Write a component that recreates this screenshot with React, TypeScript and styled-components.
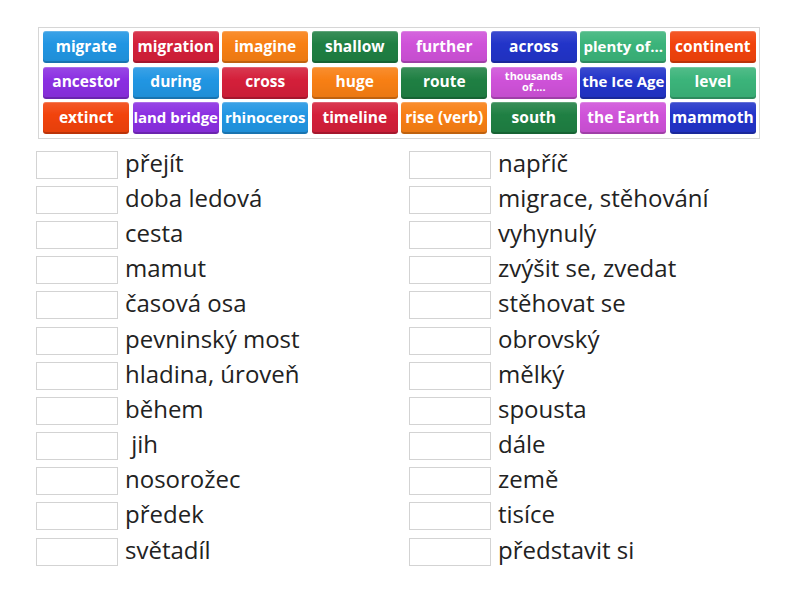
import React from 'react';
import styled, { createGlobalStyle } from 'styled-components';

// ----------------------------------------------------
// Global
// ----------------------------------------------------

const GlobalStyle = createGlobalStyle`
  body {
    margin: 0;
    background: #ffffff;
    font-family: "Open Sans", "Noto Sans", sans-serif;
  }
`;

// ----------------------------------------------------
// Tiles
// ----------------------------------------------------

const palette: Record<string, string> = {
  blue: '#2196e3',
  red: '#d41f3a',
  orange: '#f87f14',
  green: '#1f8043',
  pink: '#cf52d9',
  navy: '#2234c9',
  teal: '#3bb47a',
  flame: '#f2430c',
  purple: '#8b2fe2',
};

const tiles: { text: string; color: string; size?: number }[] = [
  { text: 'migrate', color: 'blue' },
  { text: 'migration', color: 'red' },
  { text: 'imagine', color: 'orange' },
  { text: 'shallow', color: 'green' },
  { text: 'further', color: 'pink' },
  { text: 'across', color: 'navy' },
  { text: 'plenty of...', color: 'teal', size: 15 },
  { text: 'continent', color: 'flame' },
  { text: 'ancestor', color: 'purple' },
  { text: 'during', color: 'blue' },
  { text: 'cross', color: 'red' },
  { text: 'huge', color: 'orange' },
  { text: 'route', color: 'green' },
  { text: 'thousands of....', color: 'pink', size: 11 },
  { text: 'the Ice Age', color: 'navy', size: 15 },
  { text: 'level', color: 'teal' },
  { text: 'extinct', color: 'flame' },
  { text: 'land bridge', color: 'purple', size: 15 },
  { text: 'rhinoceros', color: 'blue', size: 15 },
  { text: 'timeline', color: 'red' },
  { text: 'rise (verb)', color: 'orange' },
  { text: 'south', color: 'green' },
  { text: 'the Earth', color: 'pink' },
  { text: 'mammoth', color: 'navy' },
];

const Page = styled.div`
  padding: 27px 0 0 38px;
  width: 722px;
`;

const TileBox = styled.div`
  border: 1px solid #d6d6d6;
  background: #fff;
  padding: 3px 3px 4px 4px;
  display: grid;
  grid-template-columns: repeat(8, 1fr);
  grid-auto-rows: 32px;
  column-gap: 3.2px;
  row-gap: 3.5px;
`;

const Tile = styled.div<{ $bg: string; $size: number }>`
  display: flex;
  align-items: center;
  justify-content: center;
  text-align: center;
  border-radius: 3px;
  background: linear-gradient(
    to bottom,
    rgba(255, 255, 255, 0.12),
    rgba(255, 255, 255, 0) 40%,
    rgba(0, 0, 0, 0.06)
  ), ${(p) => p.$bg};
  box-shadow: inset 0 -2px 0 rgba(0, 0, 0, 0.18), inset 0 1px 0 rgba(255, 255, 255, 0.2);
  color: #fff;
  font-weight: 700;
  font-size: ${(p) => p.$size}px;
  line-height: ${(p) => (p.$size < 13 ? '11px' : '28px')};
  white-space: ${(p) => (p.$size < 13 ? 'normal' : 'nowrap')};
  padding: ${(p) => (p.$size < 13 ? '0 10px 3px' : '0 0 3px')};
  overflow: hidden;
`;

// ----------------------------------------------------
// Answer list
// ----------------------------------------------------

const left = [
  'přejít',
  'doba ledová',
  'cesta',
  'mamut',
  'časová osa',
  'pevninský most',
  'hladina, úroveň',
  'během',
  ' jih',
  'nosorožec',
  'předek',
  'světadíl',
];

const right = [
  'napříč',
  'migrace, stěhování',
  'vyhynulý',
  'zvýšit se, zvedat',
  'stěhovat se',
  'obrovský',
  'mělký',
  'spousta',
  'dále',
  'země',
  'tisíce',
  'představit si',
];

const Lists = styled.div`
  display: grid;
  grid-template-columns: 373px 373px;
  padding: 8px 0 0 36px;
`;

const Column = styled.div`
  display: grid;
  grid-auto-rows: 35.2px;
`;

const Row = styled.div`
  display: flex;
  align-items: center;
  gap: 7px;
`;

const Slot = styled.div`
  width: 80px;
  height: 26px;
  border: 1px solid #d3d3d3;
  background: #fff;
  flex: none;
`;

const Label = styled.span`
  font-size: 24px;
  color: #222;
  white-space: pre;
  line-height: 30px;
  margin-top: -4px;
`;

const App: React.FC = () => {
  return (
    <>
      <GlobalStyle />
      <Page>
        <TileBox>
          {tiles.map((t) => (
            <Tile key={t.text} $bg={palette[t.color]} $size={t.size ?? 15.5}>
              {t.text}
            </Tile>
          ))}
        </TileBox>
      </Page>
      <Lists>
        {[left, right].map((col, i) => (
          <Column key={i}>
            {col.map((w) => (
              <Row key={w}>
                <Slot />
                <Label>{w}</Label>
              </Row>
            ))}
          </Column>
        ))}
      </Lists>
    </>
  );
};

export default App;
